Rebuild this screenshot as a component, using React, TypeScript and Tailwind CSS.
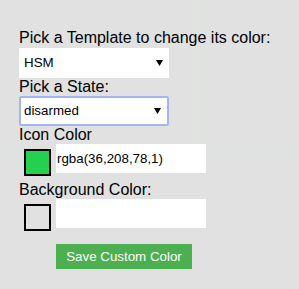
import React from "react";

const Caret = () => (
  <svg width="7" height="6" viewBox="0 0 7 6" className="shrink-0">
    <polygon points="0,0 7,0 3.5,6" fill="#000" />
  </svg>
);

interface FakeSelectProps {
  value: string;
  focused?: boolean;
}

const FakeSelect: React.FC<FakeSelectProps> = ({ value, focused }) => (
  <div
    className={`flex h-[30px] w-[150px] items-center justify-between bg-white pr-[6px] text-[13.33px] text-black ${
      focused
        ? "rounded-[2px] border-2 border-[#a3b6f4] pl-[3px]"
        : "pl-[5px]"
    }`}
  >
    <span>{value}</span>
    <Caret />
  </div>
);

interface ColorRowProps {
  swatch: string;
  value: string;
}

const ColorRow: React.FC<ColorRowProps> = ({ swatch, value }) => (
  <div className="flex h-[37px] items-start gap-[5px] pl-[5px]">
    <div
      className="mt-[5px] h-[27px] w-[27px] border-2 border-black"
      style={{ backgroundColor: swatch }}
    />
    <div className="flex h-[29px] w-[150px] items-center bg-white pl-[1px] text-[13.33px] text-black">
      {value}
    </div>
  </div>
);

export default function App() {
  return (
    <div className="relative h-[289px] w-[299px] overflow-hidden bg-[#e1e1e1] font-['Liberation_Sans',Arial,sans-serif]">
      {/* faint page behind the overlay */}
      <div className="absolute left-[196px] top-0 h-[147px] w-[2px] bg-[#dde6dd]" />
      <div className="absolute left-0 top-[147px] h-[2px] w-[299px] bg-[#dde4dd]" />

      <div className="relative pl-[19px] pt-[29px]">
        <div className="text-[16px] leading-[18px] text-black">
          Pick a Template to change its color:
        </div>
        <div className="mt-[1px]">
          <FakeSelect value="HSM" />
        </div>
        <div className="text-[16px] leading-[18px] text-black">Pick a State:</div>
        <FakeSelect value="disarmed" focused />
        <div className="text-[16px] leading-[18px] text-black">Icon Color</div>
        <ColorRow swatch="rgba(36,208,78,1)" value="rgba(36,208,78,1)" />
        <div className="text-[16px] leading-[18px] text-black">
          Background Color:
        </div>
        <ColorRow swatch="transparent" value="" />
        <button className="ml-[37px] mt-[8px] h-[25px] w-[136px] bg-[#4caf50] text-[13.33px] text-white">
          Save Custom Color
        </button>
      </div>
    </div>
  );
}
